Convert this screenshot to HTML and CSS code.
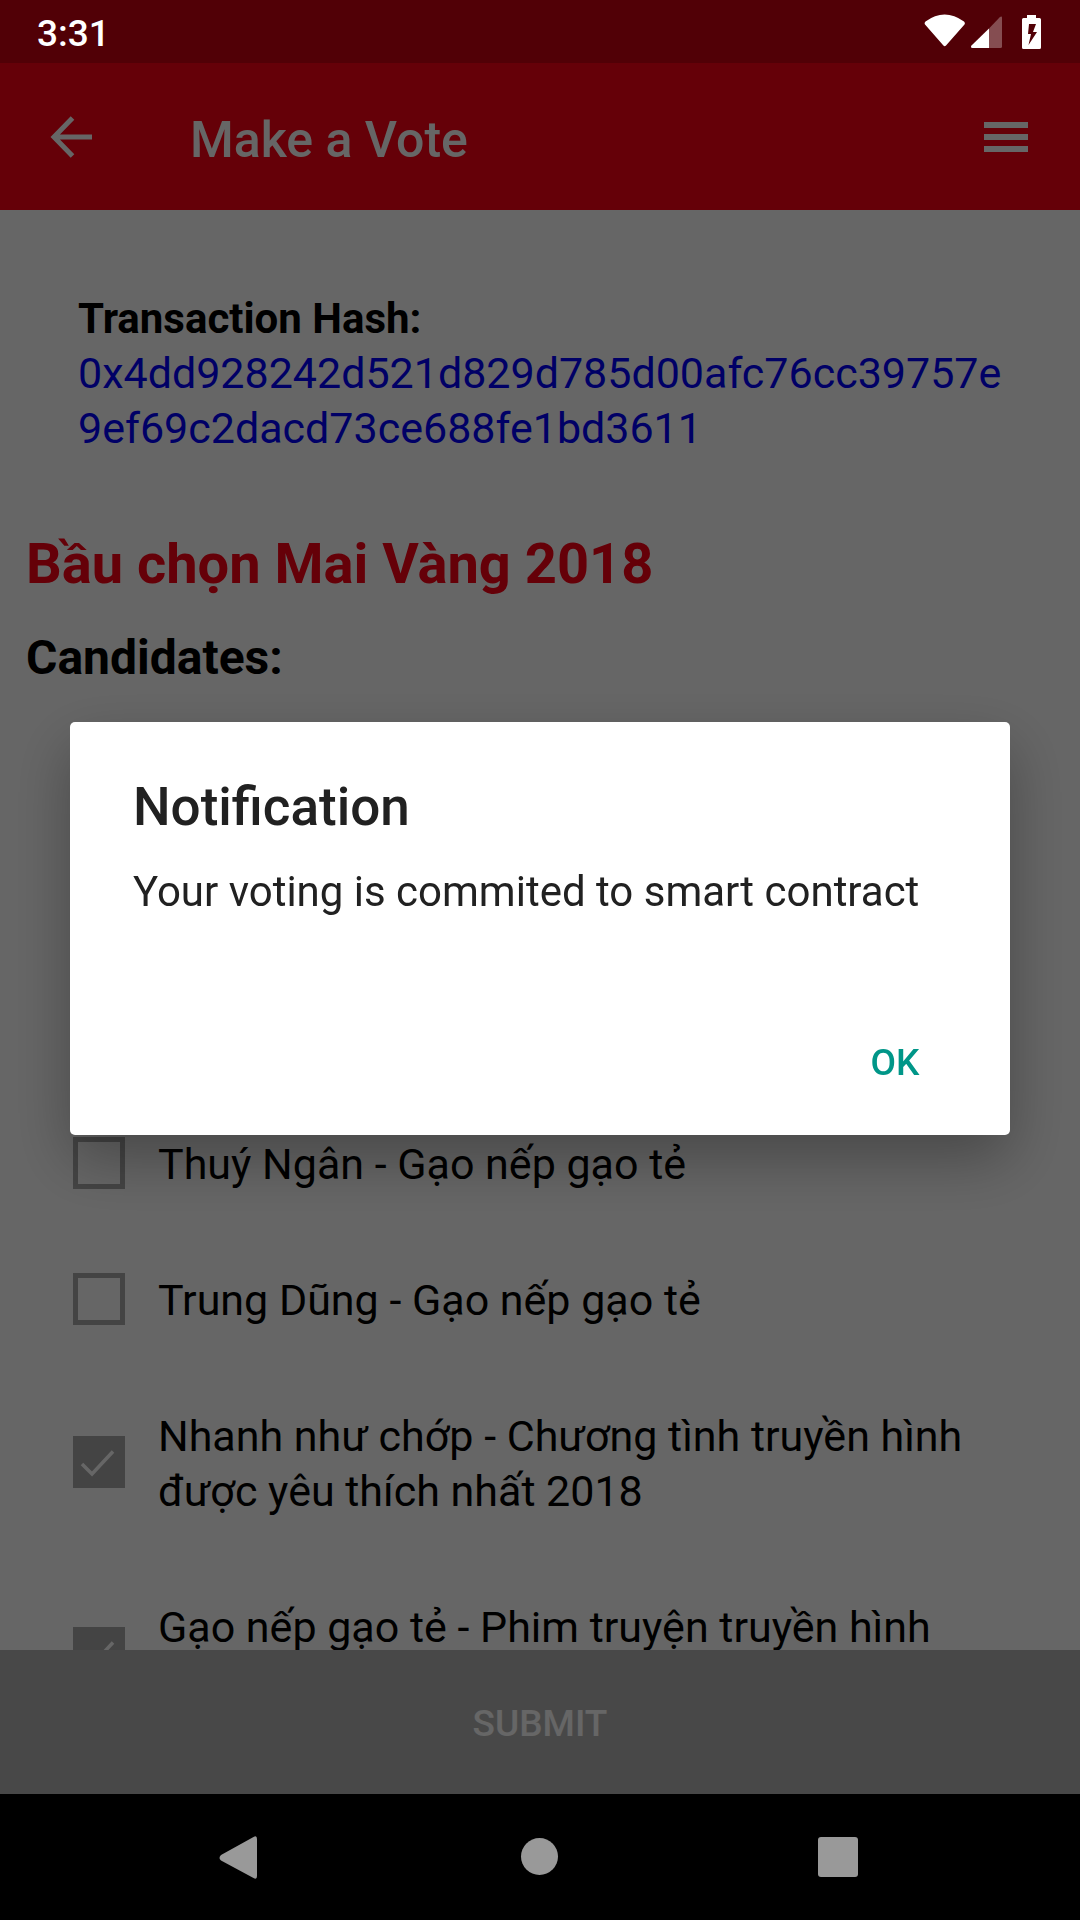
FILE: index.html
```html
<!DOCTYPE html>
<html lang="vi">
<head>
  <meta charset="utf-8">
  <meta name="viewport" content="width=device-width, initial-scale=1">
  <title>Make a Vote</title>
  <link rel="stylesheet" href="styles.css">
</head>
<body>
  <div class="screen">
    <div class="status-bar">
      <span class="status-time">3:31</span>
      <svg class="status-icons" width="120" height="36" viewBox="0 0 120 36" aria-hidden="true">
        <path d="M1.500 7.500Q20.500-6.500 40 7.500Q41.500 9 40.500 10.500L22 31.500Q20.700 33 19.400 31.500L1 10.500Q0 9 1.500 7.500Z" fill="#fff"/>
        <path d="M65 14.500V34H48.500Q46 33.500 47.500 31.500Z" fill="#fff"/>
        <path d="M65 14.500L75.500 3.500Q78 1.500 78 4V32.500Q78 34 76.500 34H65Z" fill="#fff" fill-opacity=".3"/>
        <path fill="#fff" fill-rule="evenodd" d="M103 1H112V4H115.500Q117 4 117 5.500V33.500Q117 35 115.500 35H99.500Q98 35 98 33.500V5.500Q98 4 99.500 4H103ZM105 10L104 20H107L104.500 31L113 18H109L112 10Z"/>
      </svg>
    </div>

    <header class="app-bar">
      <button class="icon-button" type="button" aria-label="Back">
        <svg width="42" height="42" viewBox="0 0 42 42"><path d="M22.500 2L4 21L22.500 40M4 21H42" fill="none" stroke="#fff" stroke-width="5"/></svg>
      </button>
      <h1 class="app-title">Make a Vote</h1>
      <button class="icon-button" type="button" aria-label="Menu">
        <svg width="44" height="30" viewBox="0 0 44 30"><path d="M0 0H44V6H0ZM0 12H44V18H0ZM0 24H44V30H0Z" fill="#fff"/></svg>
      </button>
    </header>

    <main class="content">
      <section class="transaction">
        <h2 class="transaction-title">Transaction Hash:</h2>
        <a class="transaction-hash" href="#">0x4dd928242d521d829d785d00afc76cc39757e9ef69c2dacd73ce688fe1bd3611</a>
      </section>
      <h2 class="poll-title">Bầu chọn Mai Vàng 2018</h2>
      <h3 class="poll-subtitle">Candidates:</h3>
      <div class="candidates">
        <label class="candidate">
          <input class="candidate-box" type="checkbox">
          <span class="candidate-name">Thuý Ngân - Gạo nếp gạo tẻ</span>
        </label>
        <label class="candidate">
          <input class="candidate-box" type="checkbox">
          <span class="candidate-name">Trung Dũng - Gạo nếp gạo tẻ</span>
        </label>
        <label class="candidate">
          <input class="candidate-box" type="checkbox" checked>
          <span class="candidate-name">Nhanh như chớp - Chương tình truyền hình được yêu thích nhất 2018</span>
        </label>
        <label class="candidate candidate-long">
          <input class="candidate-box" type="checkbox" checked>
          <span class="candidate-name">Gạo nếp gạo tẻ - Phim truyện truyền hình</span>
        </label>
      </div>
    </main>

    <button class="submit" type="button">SUBMIT</button>

    <nav class="system-nav">
      <button class="nav-button" type="button" aria-label="Back">
        <svg width="44" height="44" viewBox="0 0 44 44"><path d="M2 20L34.500 2Q38 0 38 4V41Q38 45 34.500 43L2 25.500Q-1 23 2 20Z" fill="#999"/></svg>
      </button>
      <button class="nav-button" type="button" aria-label="Home">
        <svg width="44" height="44" viewBox="0 0 44 44"><circle cx="21.500" cy="21.500" r="18.500" fill="#999"/></svg>
      </button>
      <button class="nav-button" type="button" aria-label="Recent apps">
        <svg width="44" height="44" viewBox="0 0 44 44"><rect x="1" y="2" width="40" height="40" rx="3" fill="#999"/></svg>
      </button>
    </nav>
  </div>

  <div class="scrim">
    <div class="dialog" role="alertdialog" aria-labelledby="dialog-title" aria-describedby="dialog-message">
      <h2 class="dialog-title" id="dialog-title">Notification</h2>
      <p class="dialog-message" id="dialog-message">Your voting is commited to smart contract</p>
      <div class="dialog-actions">
        <button class="dialog-button" type="button">OK</button>
      </div>
    </div>
  </div>
</body>
</html>
```
FILE: styles.css
```css
* {
  box-sizing: border-box;
}

body {
  margin: 0;
  font-family: Roboto, "Noto Sans", sans-serif;
  font-size: 42px;
  line-height: 55px;
  color: #000;
}

h1, h2, h3, p {
  margin: 0;
}

button {
  border: 0;
  padding: 0;
  background: none;
  font-family: inherit;
}

svg {
  display: block;
}

.screen {
  display: flex;
  flex-direction: column;
  height: 100vh;
  background: #fff;
}

/* The system bars stay above the scrim */
.status-bar,
.system-nav {
  position: relative;
  z-index: 2;
  flex: none;
}

.status-bar {
  display: flex;
  align-items: center;
  justify-content: space-between;
  height: 63px;
  padding: 0 36px 0 37px;
  background: #510006;
}

.status-time {
  padding-top: 4px;
  font-size: 37px;
  font-weight: 500;
  color: #fff;
}

.app-bar {
  display: flex;
  flex: none;
  align-items: center;
  height: 147px;
  padding: 0 52px 0 50px;
  background: #fc0014;
}

.app-title {
  flex: 1;
  padding: 8px 0 0 98px;
  font-size: 50px;
  font-weight: 500;
  color: #fff;
}

.content {
  flex: 1;
  min-height: 0;
  overflow: hidden;
  padding: 81px 26px 0;
}

.transaction {
  padding: 0 44px 0 52px;
}

.transaction-title {
  font-size: 42px;
  font-weight: 700;
}

.transaction-hash {
  display: block;
  font-size: 43px;
  color: #00f;
  text-decoration: none;
  overflow-wrap: anywhere;
}

.poll-title {
  margin-top: 71px;
  font-size: 56px;
  line-height: 74px;
}

.poll-title {
  color: #fc0014;
}

.poll-subtitle {
  margin-top: 25px;
  font-size: 48px;
  line-height: 64px;
}

.candidates {
  margin-top: 404px;
  padding: 0 47px;
  font-size: 43px;
}

.candidate {
  display: flex;
  align-items: center;
  gap: 33px;
  padding: 39px 0 38px;
}

.candidate-box {
  flex: none;
  width: 52px;
  height: 52px;
  margin: 0;
  appearance: none;
  border: 5px solid #aaa;
}

.candidate-box:checked {
  border: 0;
  background: #aaa url("data:image/svg+xml,%3Csvg xmlns='http://www.w3.org/2000/svg' viewBox='0 0 52 52'%3E%3Cpath d='M9 28L19 38L40 15.500' fill='none' stroke='%23fff' stroke-width='3.500'/%3E%3C/svg%3E");
}

.candidate-name {
  padding-top: 4px;
}

.candidate-long .candidate-name {
  min-height: 114px;
}

.submit {
  flex: none;
  height: 144px;
  padding-top: 2px;
  background: #b4b4b4;
  font-size: 37px;
  font-weight: 500;
  color: #fff;
}

.system-nav {
  display: flex;
  justify-content: center;
  height: 126px;
  background: #000;
}

.nav-button {
  display: flex;
  align-items: center;
  justify-content: center;
  width: 299px;
}

.scrim {
  position: fixed;
  inset: 0;
  z-index: 1;
  display: flex;
  align-items: center;
  padding: 63px 70px 126px;
  background: rgba(0, 0, 0, .6);
}

.dialog {
  flex: 1;
  padding: 48px 63px 27px;
  border-radius: 5px;
  background: #fff;
  box-shadow: 0 24px 60px rgba(0, 0, 0, .3);
  color: #212121;
}

.dialog-title {
  font-size: 53px;
  font-weight: 500;
  line-height: 74px;
}

.dialog-message {
  margin-top: 20px;
}

.dialog-actions {
  display: flex;
  justify-content: flex-end;
  margin-top: 97px;
}

.dialog-button {
  width: 104px;
  height: 92px;
  font-size: 37px;
  font-weight: 500;
  color: #009688;
}
```
